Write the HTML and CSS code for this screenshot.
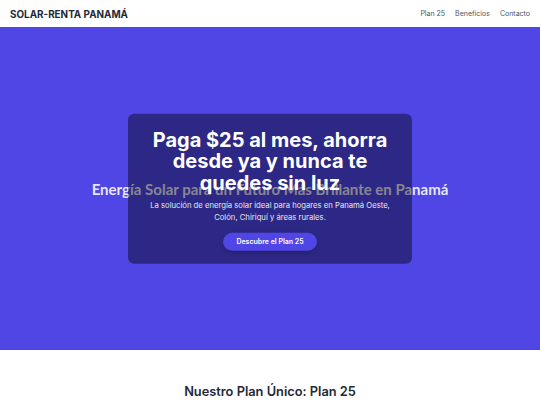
FILE: index.html
```html
<!DOCTYPE html>
<html lang="es">
<head>
<meta charset="utf-8">
<title>Solar-Renta Panamá</title>
<link rel="stylesheet" href="styles.css">
</head>
<body>
<header class="nav">
  <div class="logo">SOLAR-RENTA PANAMÁ</div>
  <nav class="links">
    <a href="#plan">Plan 25</a>
    <a href="#beneficios">Beneficios</a>
    <a href="#contacto">Contacto</a>
  </nav>
</header>
<section class="hero">
  <h2 class="hero-bg-title">Energía Solar para un Futuro Más Brillante en Panamá</h2>
  <div class="card">
    <h1 class="card-title">Paga $25 al mes, ahorra desde ya y nunca te quedes sin luz</h1>
    <p class="card-text">La solución de energía solar ideal para hogares en Panamá Oeste, Colón, Chiriquí y áreas rurales.</p>
    <a class="btn" href="#plan">Descubre el Plan 25</a>
  </div>
</section>
<section class="plan" id="plan">
  <h2 class="plan-title">Nuestro Plan Único: Plan 25</h2>
</section>
</body>
</html>
```

FILE: styles.css
```css
* { box-sizing: border-box; }
html, body { margin: 0; padding: 0; }
body {
  font-family: Inter, "Noto Sans", sans-serif;
  background: #ffffff;
  color: #1f2937;
}
.nav {
  height: 27px;
  display: flex;
  align-items: center;
  justify-content: space-between;
  padding: 0 10px;
  background: #ffffff;
}
.logo {
  font-size: 9.9px;
  font-weight: 700;
  color: #1f2937;
}
.links {
  display: flex;
  gap: 10px;
}
.links a {
  font-size: 7px;
  color: #4b5563;
  text-decoration: none;
}
.hero {
  position: relative;
  height: 323px;
  background: #4f46e5;
  display: flex;
  align-items: center;
  justify-content: center;
}
.hero-bg-title {
  margin: 0;
  font-family: Lato, sans-serif;
  font-weight: 700;
  font-size: 15px;
  line-height: 20px;
  color: rgba(255, 255, 255, 0.88);
  text-align: center;
}
.card {
  position: absolute;
  left: 50%;
  top: 50%;
  transform: translate(-50%, -50%);
  width: 284px;
  padding: 16px 20px 13px;
  background: rgba(0, 0, 0, 0.42);
  border-radius: 6px;
  text-align: center;
}
.card-title {
  margin: 0;
  font-size: 20px;
  line-height: 21.5px;
  font-weight: 700;
  color: #ffffff;
}
.card-text {
  margin: 6px 0 4px;
  font-size: 7.7px;
  line-height: 12px;
  color: #e5e7eb;
}
.btn {
  display: inline-block;
  margin-top: 4px;
  padding: 5px 13px;
  font-size: 7px;
  line-height: 8px;
  font-weight: 600;
  color: #ffffff;
  background: #4f46e5;
  border-radius: 999px;
  text-decoration: none;
  box-shadow: 0 2px 4px rgba(0, 0, 0, 0.2);
}
.plan {
  padding: 32px 10px;
  text-align: center;
}
.plan-title {
  margin: 0;
  font-size: 12.8px;
  line-height: 20px;
  font-weight: 600;
  color: #1f2937;
}
```
